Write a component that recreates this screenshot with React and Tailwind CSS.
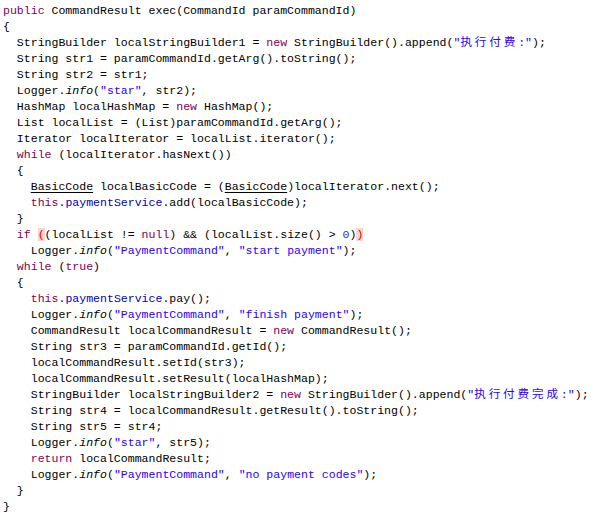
import React from 'react';

// each line: [indent level, tokens]; a token is plain text or [text, kind]
const lines = [
  [0, [['public', 'k'], ' CommandResult exec(CommandId paramCommandId)']],
  [0, ['{']],
  [1, ['StringBuilder localStringBuilder1 = ', ['new', 'k'], ' StringBuilder().append(', ['"', 's'], ['执行付费', 'c'], [':"', 's'], ');']],
  [1, ['String str1 = paramCommandId.getArg().toString();']],
  [1, ['String str2 = str1;']],
  [1, ['Logger.', ['info', 'i'], '(', ['"star"', 's'], ', str2);']],
  [1, ['HashMap localHashMap = ', ['new', 'k'], ' HashMap();']],
  [1, ['List localList = (List)paramCommandId.getArg();']],
  [1, ['Iterator localIterator = localList.iterator();']],
  [1, [['while', 'k'], ' (localIterator.hasNext())']],
  [1, ['{']],
  [2, [['BasicCode', 'u'], ' localBasicCode = (', ['BasicCode', 'u'], ')localIterator.next();']],
  [2, [['this', 'k'], '.', ['paymentService', 'f'], '.add(localBasicCode);']],
  [1, ['}']],
  [1, [['if', 'k'], ' ', ['(', 'e'], '(localList != ', ['null', 'k'], ') && (localList.size() > ', ['0', 'n'], ')', [')', 'e']]],
  [2, ['Logger.', ['info', 'i'], '(', ['"PaymentCommand"', 's'], ', ', ['"start payment"', 's'], ');']],
  [1, [['while', 'k'], ' (', ['true', 'k'], ')']],
  [1, ['{']],
  [2, [['this', 'k'], '.', ['paymentService', 'f'], '.pay();']],
  [2, ['Logger.', ['info', 'i'], '(', ['"PaymentCommand"', 's'], ', ', ['"finish payment"', 's'], ');']],
  [2, ['CommandResult localCommandResult = ', ['new', 'k'], ' CommandResult();']],
  [2, ['String str3 = paramCommandId.getId();']],
  [2, ['localCommandResult.setId(str3);']],
  [2, ['localCommandResult.setResult(localHashMap);']],
  [2, ['StringBuilder localStringBuilder2 = ', ['new', 'k'], ' StringBuilder().append(', ['"', 's'], ['执行付费完成', 'c'], [':"', 's'], ');']],
  [2, ['String str4 = localCommandResult.getResult().toString();']],
  [2, ['String str5 = str4;']],
  [2, ['Logger.', ['info', 'i'], '(', ['"star"', 's'], ', str5);']],
  [2, [['return', 'k'], ' localCommandResult;']],
  [2, ['Logger.', ['info', 'i'], '(', ['"PaymentCommand"', 's'], ', ', ['"no payment codes"', 's'], ');']],
  [1, ['}']],
  [0, ['}']],
];

const kinds = {
  k: 'text-[#7f0055]',
  s: 'text-[#2a00ff]',
  c: 'text-[#2a00ff] tracking-[0.25em]',
  f: 'text-[#0000c0]',
  n: 'text-[#3a2ad0]',
  i: 'italic',
  u: 'underline underline-offset-2',
  e: 'bg-[#fbd3d3] text-[#e00000]',
};

const Token = ({ t }) => {
  if (typeof t === 'string') return <span>{t}</span>;
  return <span className={kinds[t[1]]}>{t[0]}</span>;
};

export default function App() {
  return (
    <div className="w-[602px] h-[515px] bg-white overflow-hidden pl-[3px] pt-[3px] font-['Liberation_Mono','Noto_Sans_CJK_SC',monospace] text-[11.55px] leading-4 text-black">
      {lines.map(([level, tokens], i) => (
        <div key={i} className="h-4 whitespace-pre">
          <span>{'  '.repeat(level)}</span>
          {tokens.map((t, j) => (
            <Token key={j} t={t} />
          ))}
        </div>
      ))}
    </div>
  );
}
